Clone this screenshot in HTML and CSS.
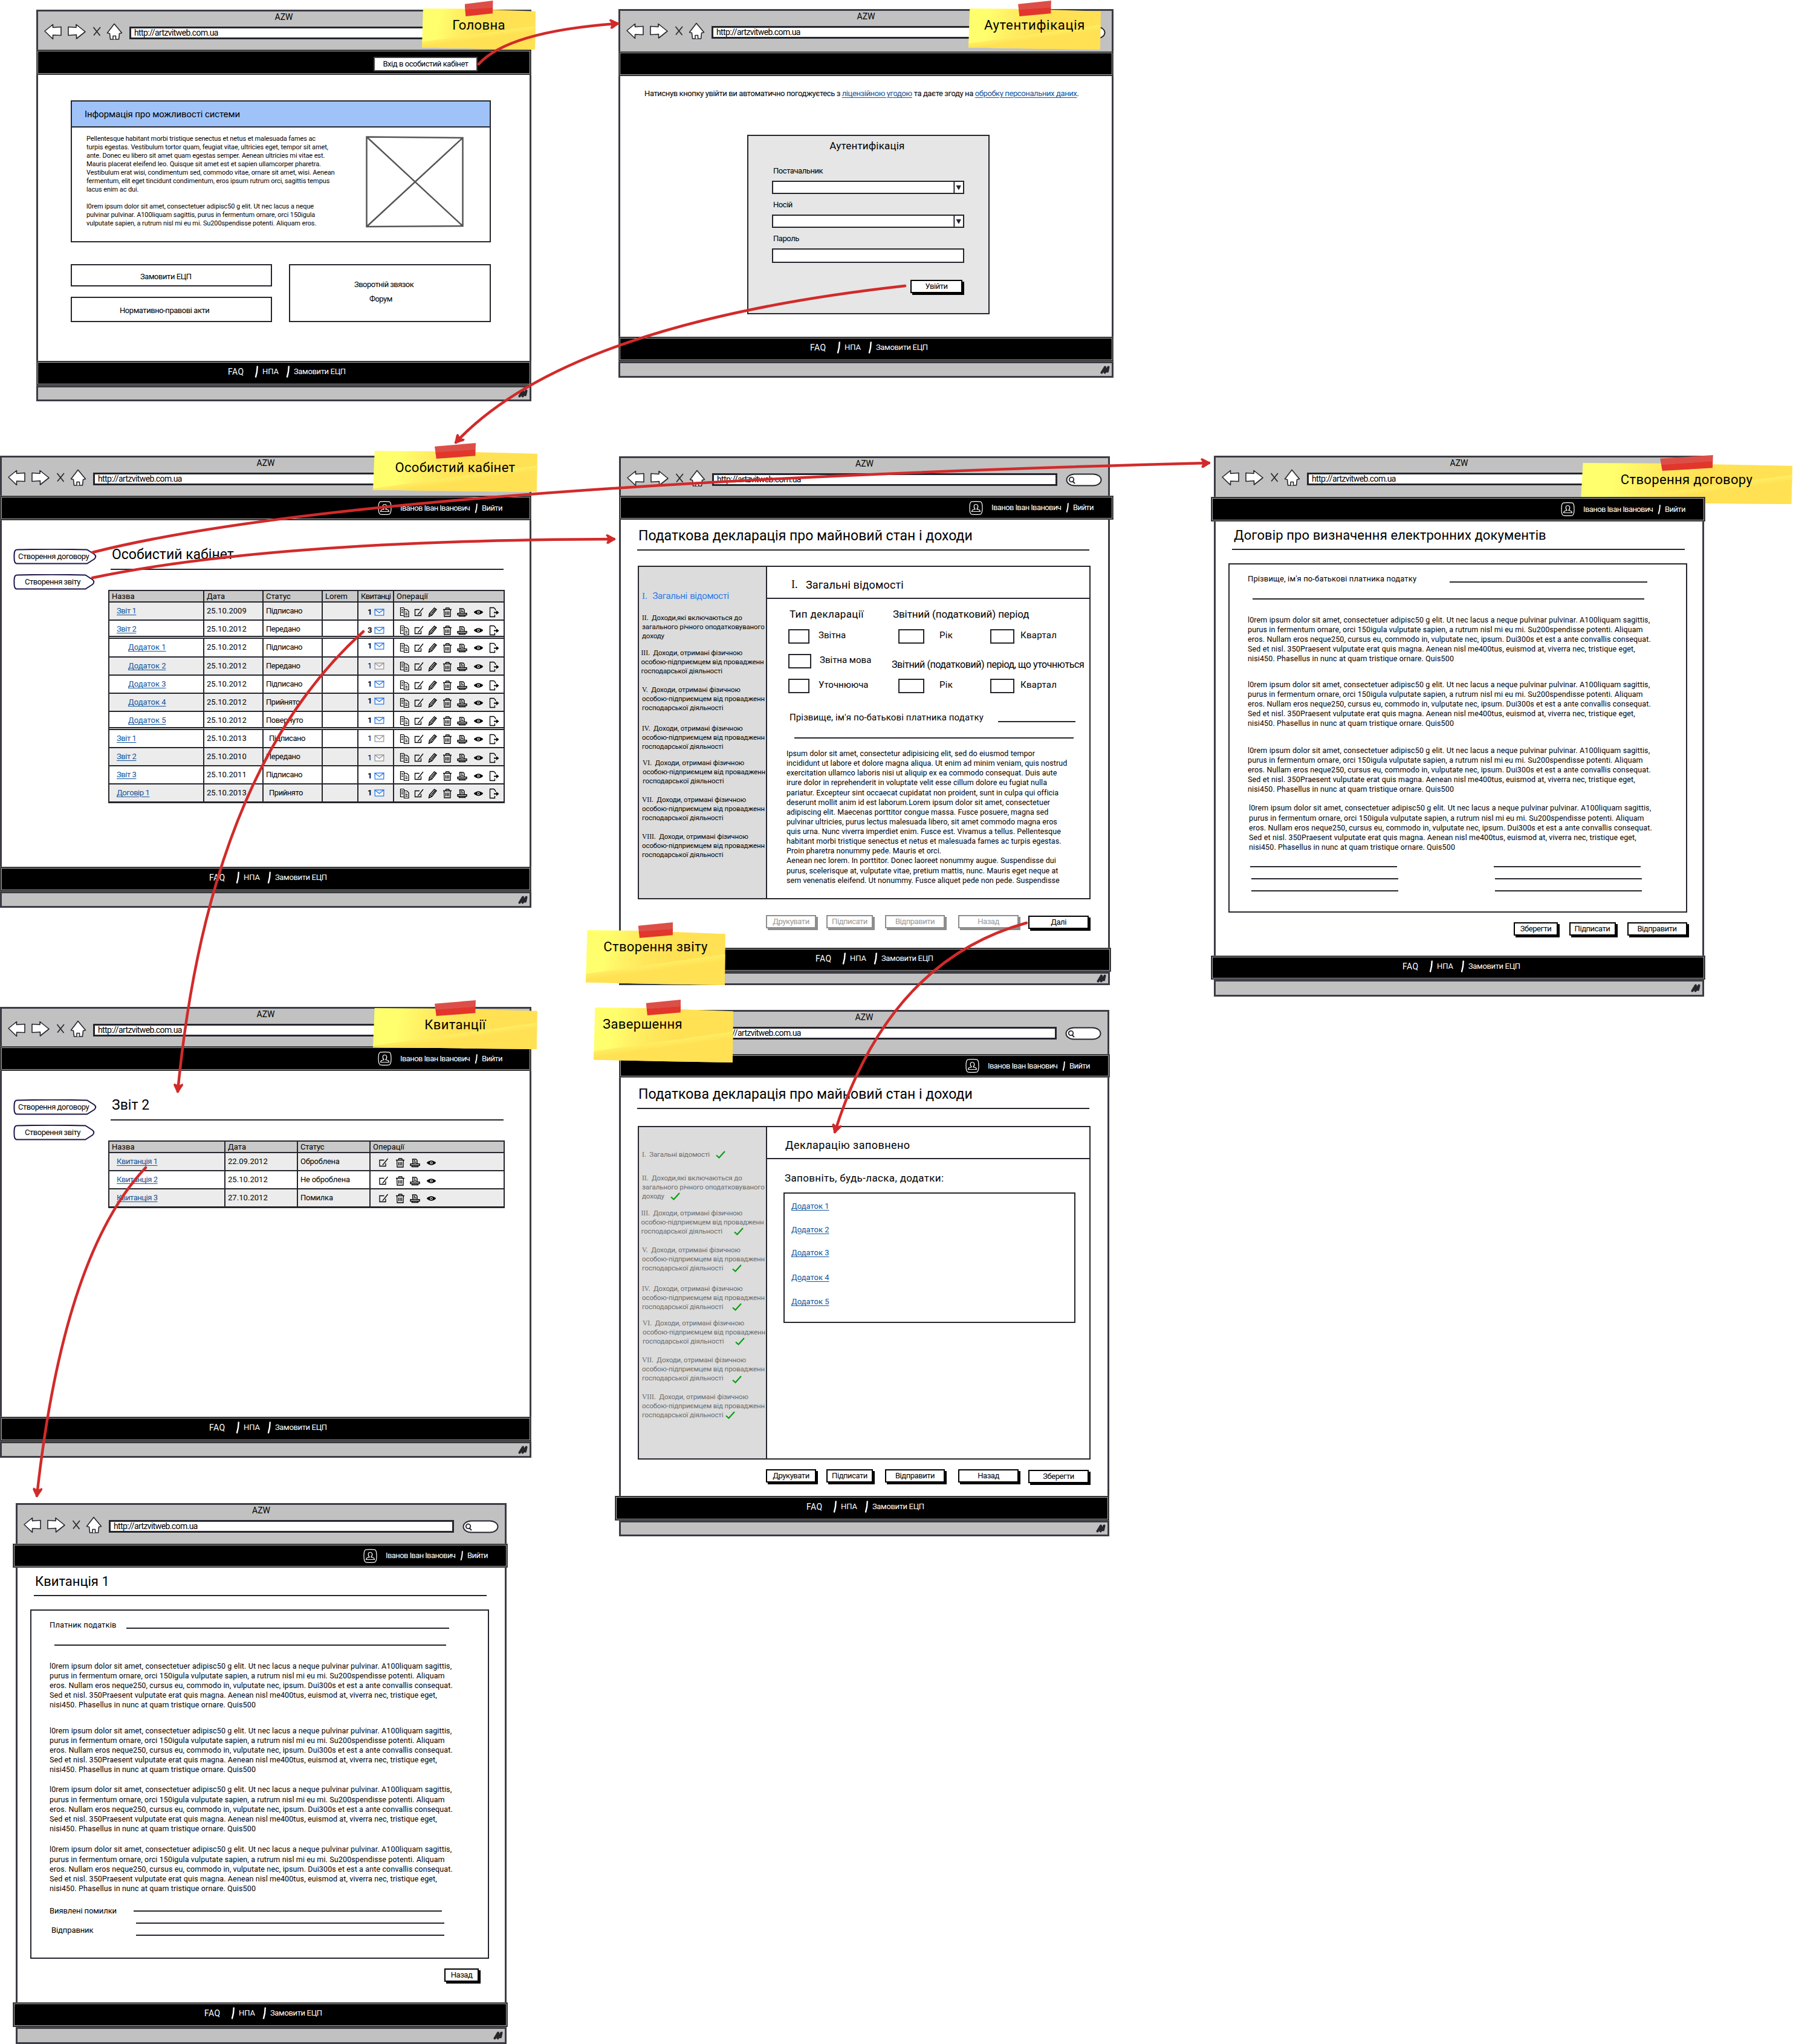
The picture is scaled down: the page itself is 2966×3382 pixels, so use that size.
FILE: index.html
```html
<!DOCTYPE html>
<html lang="uk">
<head>
<meta charset="utf-8">
<title>AZW</title>
<link rel="stylesheet" href="styles.css">
</head>
<body>
<svg class="sprite" aria-hidden="true">
  <symbol id="i-nav" viewBox="0 0 132 34">
    <g fill="#fff" stroke="#25262d" stroke-width="1.6" stroke-linejoin="round">
      <path d="M2 15.500L15.500 4.500V9.500L29 8.500V22.500L15.500 22V28.500Z"/>
      <path d="M41 8.500L54 9.500V4.500L69 16.500L54.500 28V21.500L41 22.500Z"/>
      <path d="M117 3.500L129.500 18.500L125.500 19.500L124.500 29H110.500L109.500 19.500L105.500 18.500Z"/>
      <path d="M115 29V23.500H119.500V29"/>
    </g>
    <path d="M82.500 9L93.500 23M94 9L83 22.500" fill="none" stroke="#2b2c34" stroke-width="1.800"/>
  </symbol>
  <symbol id="i-search" viewBox="0 0 60 22">
    <rect x="1.500" y="1.500" width="57" height="19" rx="13" ry="9.500" fill="#fff" stroke="#25262d" stroke-width="2"/>
    <circle cx="9.500" cy="10.500" r="3.800" fill="none" stroke="#25262d" stroke-width="1.800"/>
    <path d="M11 13L15 17" stroke="#25262d" stroke-width="2"/>
  </symbol>
  <symbol id="i-grip" viewBox="0 0 16 14">
    <path d="M2.500 11.500L8 2.500L7.500 11.500L13.500 2.500L12 9.500" fill="none" stroke="#26262c" stroke-width="4" stroke-linejoin="round" stroke-linecap="round"/>
  </symbol>
  <symbol id="i-slash" viewBox="0 0 6 20">
    <path d="M4.800 0.500L4 10L1.800 19.500" fill="none" stroke="#fff" stroke-width="2.400"/>
  </symbol>
  <symbol id="i-user" viewBox="0 0 23 23">
    <g fill="none" stroke="#fff" stroke-width="1.200">
      <path d="M4 1.200Q11.500 0 19 1.200Q22 2 22 11.500Q22 21 19 21.800Q11.500 23 4 21.800Q1 21 1 11.500Q1 2 4 1.200Z"/>
      <path d="M4.500 17.500H18.500L17.500 15L13 13.500Q15.500 10.500 14.500 7.500Q13.500 5.500 11.500 5.500Q9 5.500 8.300 7.500Q7.500 10.500 10 13.500L5.500 15Z"/>
    </g>
  </symbol>
  <symbol id="i-tag" viewBox="0 0 138 26" preserveAspectRatio="none">
    <path d="M6 1.500Q64 0 122 1.500L134 9Q138.500 13 134 17L122 24.500H6Q1 24.500 1.500 13Q1 1.500 6 1.500Z" fill="#fff" stroke="#1d1548" stroke-width="2"/>
  </symbol>
  <symbol id="i-mail" viewBox="0 0 17 12">
    <path d="M1 1.200L16 0.900L15.700 11L1.300 11.200ZM1 1.200L8.500 7L16 0.900" fill="#fff" fill-opacity=".6" stroke="currentColor" stroke-width="1.300"/>
  </symbol>
  <symbol id="i-check" viewBox="0 0 16 13">
    <path d="M1 7.500L5.500 11.500L15 1" fill="none" stroke="#0a9e14" stroke-width="2.200"/>
  </symbol>
  <symbol id="i-combo" viewBox="0 0 16 20">
    <path d="M1 0V20" stroke="#22232b" stroke-width="2"/>
    <path d="M5 6.500H12.500L9 13.500Z" fill="#22232b" stroke="#22232b"/>
  </symbol>
  <symbol id="i-edit" viewBox="0 0 18 18">
    <path d="M9.500 4.500H2V14.500H12V9.500M15.500 2L8 11.500L6.500 12.500" fill="none" stroke="#000" stroke-width="1.300"/>
  </symbol>
  <symbol id="i-trash" viewBox="0 0 18 18">
    <path d="M2 4.500H16M6 4.500L6.800 2H11.800L12.600 4.500M3.600 4.500L4 16H14L14.300 4.500M6.500 7.500V13.500M9 7.500V13.500M11.500 7.500V13.500" fill="none" stroke="#000" stroke-width="1.300"/>
  </symbol>
  <symbol id="i-print" viewBox="0 0 18 18">
    <path d="M5.500 10.500L5 3H10.500L12.500 5V10.500M7 5.500H9.500M7 8H11M1.500 10.800H16.500V13.500H1.500ZM4 13.500V15.500H14V13.500" fill="none" stroke="#000" stroke-width="1.400"/>
  </symbol>
  <symbol id="i-eye" viewBox="0 0 18 18">
    <path d="M1.200 9Q9 1.500 16.800 9Q9 16.500 1.200 9Z"/>
    <circle cx="9" cy="9" r="2.300" fill="#fff"/>
    <circle cx="9" cy="9" r="1.200"/>
  </symbol>
  <symbol id="i-ops" viewBox="0 0 168 18">
    <g fill="none" stroke="#000" stroke-width="1.200">
      <path d="M6.500 14.500H1.500V1.500H6.500L8.500 3.500M7.500 4.500H12L15 7.500V16.500H7.500Z"/>
      <path d="M3 4.500H6M3 7H6M3 9.500H6M9.500 8H11.500M9.500 10.700H13M9.500 13.300H13"/>
      <path d="M48.500 16L49.500 11L57.500 2L61 4.500L53.500 14ZM49.500 11L53.500 14M52.500 11.500L59 4" stroke-width="1.400"/>
      <path d="M157.500 13V16.500H149.500V1.500H156L158.500 4V6" stroke-width="1.300"/>
      <path d="M156 9.500H162" stroke-width="2"/>
    </g>
    <path d="M160 6L164.500 9.500L160 13Z"/>
    <use href="#i-edit" x="23.500" y="0" width="18" height="18"/>
    <use href="#i-trash" x="70" y="0" width="18" height="18"/>
    <use href="#i-print" x="94.500" y="0" width="18" height="18"/>
    <use href="#i-eye" x="121.500" y="0" width="18" height="18"/>
  </symbol>
  <symbol id="i-ops-short" viewBox="0 0 98 18">
    <use href="#i-edit" x="0" y="0" width="18" height="18"/>
    <use href="#i-trash" x="27" y="0" width="18" height="18"/>
    <use href="#i-print" x="51.500" y="0" width="18" height="18"/>
    <use href="#i-eye" x="78.500" y="0" width="18" height="18"/>
  </symbol>
</svg>

<main class="board">

<section class="window home">
  <header class="chrome"><div class="chrome-title">AZW</div><div class="toolbar"><svg class="nav"><use href="#i-nav"/></svg><div class="url">http://artzvitweb.com.ua</div><svg class="search"><use href="#i-search"/></svg></div></header>
  <div class="topbar"><a class="enter">Вхід в особистий кабінет</a></div>
  <div class="body">
    <article class="info">
      <h2 class="info-title">Інформація про можливості системи</h2>
      <div class="info-body">
        <p class="info-text">Pellentesque habitant morbi tristique senectus et netus et malesuada fames ac<br>turpis egestas. Vestibulum tortor quam, feugiat vitae, ultricies eget, tempor sit amet,<br>ante. Donec eu libero sit amet quam egestas semper. Aenean ultricies mi vitae est.<br>Mauris placerat eleifend leo. Quisque sit amet est et sapien ullamcorper pharetra.<br>Vestibulum erat wisi, condimentum sed, commodo vitae, ornare sit amet, wisi. Aenean<br>fermentum, elit eget tincidunt condimentum, eros ipsum rutrum orci, sagittis tempus<br>lacus enim ac dui.<br><br>l0rem ipsum dolor sit amet, consectetuer adipisc50 g elit. Ut nec lacus a neque<br>pulvinar pulvinar. A100liquam sagittis, purus in fermentum ornare, orci 150igula<br>vulputate sapien, a rutrum nisl mi eu mi. Su200spendisse potenti. Aliquam eros.</p>
        <svg class="picture" viewBox="0 0 162 151"><path d="M1.500 1.500L160.500 3V149L1.500 150ZM1.500 1.500L160.500 149M160.500 3L1.500 150" fill="none" stroke="#555" stroke-width="2.500"/></svg>
      </div>
    </article>
    <div class="tiles">
      <div class="tile order">Замовити ЕЦП</div>
      <div class="tile contact"><p>Зворотній звязок</p><p class="forum">Форум</p></div>
      <div class="tile acts">Нормативно-правові акти</div>
    </div>
  </div>
  <footer class="links"><a>FAQ</a><svg><use href="#i-slash"/></svg><a>НПА</a><svg><use href="#i-slash"/></svg><a>Замовити ЕЦП</a></footer>
  <div class="status"><svg><use href="#i-grip"/></svg></div>
</section>

<section class="window login">
  <header class="chrome"><div class="chrome-title">AZW</div><div class="toolbar"><svg class="nav"><use href="#i-nav"/></svg><div class="url">http://artzvitweb.com.ua</div><svg class="search"><use href="#i-search"/></svg></div></header>
  <div class="topbar"></div>
  <div class="body">
    <p class="consent">Натиснув кнопку увійти ви автоматично погоджуєтесь з <a class="link">ліцензійною угодою</a> та даєте згоду на <a class="link">обробку персональних даних</a>.</p>
    <form class="auth">
      <h2 class="auth-title">Аутентифікація</h2>
      <label class="auth-label">Постачальник</label>
      <div class="field"><svg><use href="#i-combo"/></svg></div>
      <label class="auth-label">Носій</label>
      <div class="field"><svg><use href="#i-combo"/></svg></div>
      <label class="auth-label">Пароль</label>
      <div class="field password"></div>
      <a class="btn signin">Увійти</a>
    </form>
  </div>
  <footer class="links"><a>FAQ</a><svg><use href="#i-slash"/></svg><a>НПА</a><svg><use href="#i-slash"/></svg><a>Замовити ЕЦП</a></footer>
  <div class="status"><svg><use href="#i-grip"/></svg></div>
</section>

<section class="window cabinet">
  <header class="chrome"><div class="chrome-title">AZW</div><div class="toolbar"><svg class="nav"><use href="#i-nav"/></svg><div class="url">http://artzvitweb.com.ua</div><svg class="search"><use href="#i-search"/></svg></div></header>
  <div class="topbar user"><svg class="avatar"><use href="#i-user"/></svg><span class="name">Іванов Іван Іванович</span><svg class="bar"><use href="#i-slash"/></svg><a>Вийти</a></div>
  <div class="body split">
    <nav class="tags"><a class="tag"><svg><use href="#i-tag"/></svg><span>Створення договору</span></a><a class="tag short"><svg><use href="#i-tag"/></svg><span>Створення звіту</span></a></nav>
    <div class="main">
      <h1 class="page-title">Особистий кабінет</h1>
      <div class="rule"></div>
      <div class="grid reports">
        <div class="row head"><span>Назва</span><span>Дата</span><span>Статус</span><span>Lorem</span><span class="tight">Квитанці</span><span>Операції</span></div>
        <div class="row odd"><span><a class="link">Звіт 1</a></span><span>25.10.2009</span><span>Підписано</span><span></span><span class="mail low">1<svg><use href="#i-mail"/></svg></span><span class="ops"><svg><use href="#i-ops"/></svg></span></div>
        <div class="row last"><span><a class="link">Звіт 2</a></span><span>25.10.2012</span><span>Передано</span><span></span><span class="mail low">3<svg><use href="#i-mail"/></svg></span><span class="ops"><svg><use href="#i-ops"/></svg></span></div>
        <div class="row tall nested"><span><a class="link">Додаток 1</a></span><span>25.10.2012</span><span>Підписано</span><span></span><span class="mail high">1<svg><use href="#i-mail"/></svg></span><span class="ops mid"><svg><use href="#i-ops"/></svg></span></div>
        <div class="row odd nested"><span><a class="link">Додаток 2</a></span><span>25.10.2012</span><span>Передано</span><span></span><span class="mail read">1<svg><use href="#i-mail"/></svg></span><span class="ops mid"><svg><use href="#i-ops"/></svg></span></div>
        <div class="row nested"><span><a class="link">Додаток 3</a></span><span>25.10.2012</span><span>Підписано</span><span></span><span class="mail">1<svg><use href="#i-mail"/></svg></span><span class="ops"><svg><use href="#i-ops"/></svg></span></div>
        <div class="row odd nested"><span><a class="link">Додаток 4</a></span><span>25.10.2012</span><span>Прийнято</span><span></span><span class="mail high">1<svg><use href="#i-mail"/></svg></span><span class="ops mid"><svg><use href="#i-ops"/></svg></span></div>
        <div class="row nested last"><span><a class="link">Додаток 5</a></span><span>25.10.2012</span><span>Повернуто</span><span></span><span class="mail">1<svg><use href="#i-mail"/></svg></span><span class="ops mid"><svg><use href="#i-ops"/></svg></span></div>
        <div class="row"><span><a class="link">Звіт 1</a></span><span>25.10.2013</span><span class="shift">Підписано</span><span></span><span class="mail read">1<svg><use href="#i-mail"/></svg></span><span class="ops mid"><svg><use href="#i-ops"/></svg></span></div>
        <div class="row odd"><span><a class="link">Звіт 2</a></span><span>25.10.2010</span><span>Передано</span><span></span><span class="mail read low">1<svg><use href="#i-mail"/></svg></span><span class="ops"><svg><use href="#i-ops"/></svg></span></div>
        <div class="row"><span><a class="link">Звіт 3</a></span><span>25.10.2011</span><span>Підписано</span><span></span><span class="mail low">1<svg><use href="#i-mail"/></svg></span><span class="ops"><svg><use href="#i-ops"/></svg></span></div>
        <div class="row odd"><span><a class="link">Договір 1</a></span><span>25.10.2013</span><span class="shift">Прийнято</span><span></span><span class="mail">1<svg><use href="#i-mail"/></svg></span><span class="ops mid"><svg><use href="#i-ops"/></svg></span></div>
      </div>
    </div>
  </div>
  <footer class="links"><a>FAQ</a><svg><use href="#i-slash"/></svg><a>НПА</a><svg><use href="#i-slash"/></svg><a>Замовити ЕЦП</a></footer>
  <div class="status"><svg><use href="#i-grip"/></svg></div>
</section>

<section class="window declaration">
  <header class="chrome"><div class="chrome-title">AZW</div><div class="toolbar"><svg class="nav"><use href="#i-nav"/></svg><div class="url">http://artzvitweb.com.ua</div><svg class="search"><use href="#i-search"/></svg></div></header>
  <div class="topbar user"><svg class="avatar"><use href="#i-user"/></svg><span class="name">Іванов Іван Іванович</span><svg class="bar"><use href="#i-slash"/></svg><a>Вийти</a></div>
  <div class="body">
    <h1 class="page-title">Податкова декларація про майновий стан і доходи</h1>
    <div class="rule"></div>
    <div class="wizard">
      <ol class="steps">
        <li class="current"><i>I.</i> &nbsp;Загальні відомості</li>
        <li class="s2"><i>II.</i> &nbsp;Доходи,які включаються до<br>загального річного оподатковуваного<br>доходу</li>
        <li class="s3"><i>III.</i> &nbsp;Доходи, отримані фізичною<br>особою-підприємцем від провадженн<br>господарської діяльності</li>
        <li class="s4"><i>V.</i> &nbsp;Доходи, отримані фізичною<br>особою-підприємцем від провадженн<br>господарської діяльності</li>
        <li class="s5"><i>IV.</i> &nbsp;Доходи, отримані фізичною<br>особою-підприємцем від провадженн<br>господарської діяльності</li>
        <li class="s6"><i>VI.</i> &nbsp;Доходи, отримані фізичною<br>особою-підприємцем від провадженн<br>господарської діяльності</li>
        <li class="s7"><i>VII.</i> &nbsp;Доходи, отримані фізичною<br>особою-підприємцем від провадженн<br>господарської діяльності</li>
        <li class="s8"><i>VIII.</i> &nbsp;Доходи, отримані фізичною<br>особою-підприємцем від провадженн<br>господарської діяльності</li>
      </ol>
      <div class="pane">
        <h2 class="pane-title first"><i>I.</i><span>Загальні відомості</span></h2>
        <div class="choices">
          <div class="kinds">
            <h3>Тип декларації</h3>
            <div class="option k1"><b class="box"></b>Звітна</div>
            <div class="option k2"><b class="box"></b>Звітна мова</div>
            <div class="option k3"><b class="box"></b>Уточнююча</div>
          </div>
          <div class="periods">
            <h3>Звітний (податковий) період</h3>
            <div class="period"><b class="box"></b><span>Рік</span><b class="box"></b><span>Квартал</span></div>
            <h3 class="second">Звітний (податковий) період, що уточнються</h3>
            <div class="period"><b class="box"></b><span>Рік</span><b class="box"></b><span>Квартал</span></div>
          </div>
        </div>
        <div class="payer"><span>Прізвище, ім'я по-батькові платника податку</span><hr></div>
        <hr class="payer-line">
        <p class="terms">Ipsum dolor sit amet, consectetur adipisicing elit, sed do eiusmod tempor<br>incididunt ut labore et dolore magna aliqua. Ut enim ad minim veniam, quis nostrud<br>exercitation ullamco laboris nisi ut aliquip ex ea commodo consequat. Duis aute<br>irure dolor in reprehenderit in voluptate velit esse cillum dolore eu fugiat nulla<br>pariatur. Excepteur sint occaecat cupidatat non proident, sunt in culpa qui officia<br>deserunt mollit anim id est laborum.Lorem ipsum dolor sit amet, consectetuer<br>adipiscing elit. Maecenas porttitor congue massa. Fusce posuere, magna sed<br>pulvinar ultricies, purus lectus malesuada libero, sit amet commodo magna eros<br>quis urna. Nunc viverra imperdiet enim. Fusce est. Vivamus a tellus. Pellentesque<br>habitant morbi tristique senectus et netus et malesuada fames ac turpis egestas.<br>Proin pharetra nonummy pede. Mauris et orci.<br>Aenean nec lorem. In porttitor. Donec laoreet nonummy augue. Suspendisse dui<br>purus, scelerisque at, vulputate vitae, pretium mattis, nunc. Mauris eget neque at<br>sem venenatis eleifend. Ut nonummy. Fusce aliquet pede non pede. Suspendisse</p>
      </div>
    </div>
    <div class="actions"><a class="btn off">Друкувати</a><a class="btn off">Підписати</a><a class="btn off">Відправити</a><a class="btn off">Назад</a><a class="btn">Далі</a></div>
  </div>
  <footer class="links"><a>FAQ</a><svg><use href="#i-slash"/></svg><a>НПА</a><svg><use href="#i-slash"/></svg><a>Замовити ЕЦП</a></footer>
  <div class="status"><svg><use href="#i-grip"/></svg></div>
</section>

<section class="window contract">
  <header class="chrome"><div class="chrome-title">AZW</div><div class="toolbar"><svg class="nav"><use href="#i-nav"/></svg><div class="url">http://artzvitweb.com.ua</div><svg class="search"><use href="#i-search"/></svg></div></header>
  <div class="topbar user"><svg class="avatar"><use href="#i-user"/></svg><span class="name">Іванов Іван Іванович</span><svg class="bar"><use href="#i-slash"/></svg><a>Вийти</a></div>
  <div class="body">
    <h1 class="page-title">Договір про визначення електронних документів</h1>
    <div class="rule"></div>
    <div class="doc">
      <div class="doc-field"><span>Прізвище, ім'я по-батькові платника податку</span><hr></div>
      <hr class="doc-line">
      <p class="para">l0rem ipsum dolor sit amet, consectetuer adipisc50 g elit. Ut nec lacus a neque pulvinar pulvinar. A100liquam sagittis,<br>purus in fermentum ornare, orci 150igula vulputate sapien, a rutrum nisl mi eu mi. Su200spendisse potenti. Aliquam<br>eros. Nullam eros neque250, cursus eu, commodo in, vulputate nec, ipsum. Dui300s et est a ante convallis consequat.<br>Sed et nisl. 350Praesent vulputate erat quis magna. Aenean nisl me400tus, euismod at, viverra nec, tristique eget,<br>nisi450. Phasellus in nunc at quam tristique ornare. Quis500</p>
      <p class="para">l0rem ipsum dolor sit amet, consectetuer adipisc50 g elit. Ut nec lacus a neque pulvinar pulvinar. A100liquam sagittis,<br>purus in fermentum ornare, orci 150igula vulputate sapien, a rutrum nisl mi eu mi. Su200spendisse potenti. Aliquam<br>eros. Nullam eros neque250, cursus eu, commodo in, vulputate nec, ipsum. Dui300s et est a ante convallis consequat.<br>Sed et nisl. 350Praesent vulputate erat quis magna. Aenean nisl me400tus, euismod at, viverra nec, tristique eget,<br>nisi450. Phasellus in nunc at quam tristique ornare. Quis500</p>
      <p class="para">l0rem ipsum dolor sit amet, consectetuer adipisc50 g elit. Ut nec lacus a neque pulvinar pulvinar. A100liquam sagittis,<br>purus in fermentum ornare, orci 150igula vulputate sapien, a rutrum nisl mi eu mi. Su200spendisse potenti. Aliquam<br>eros. Nullam eros neque250, cursus eu, commodo in, vulputate nec, ipsum. Dui300s et est a ante convallis consequat.<br>Sed et nisl. 350Praesent vulputate erat quis magna. Aenean nisl me400tus, euismod at, viverra nec, tristique eget,<br>nisi450. Phasellus in nunc at quam tristique ornare. Quis500</p>
      <p class="para">l0rem ipsum dolor sit amet, consectetuer adipisc50 g elit. Ut nec lacus a neque pulvinar pulvinar. A100liquam sagittis,<br>purus in fermentum ornare, orci 150igula vulputate sapien, a rutrum nisl mi eu mi. Su200spendisse potenti. Aliquam<br>eros. Nullam eros neque250, cursus eu, commodo in, vulputate nec, ipsum. Dui300s et est a ante convallis consequat.<br>Sed et nisl. 350Praesent vulputate erat quis magna. Aenean nisl me400tus, euismod at, viverra nec, tristique eget,<br>nisi450. Phasellus in nunc at quam tristique ornare. Quis500</p>
      <div class="signs"><hr><hr><hr class="in"><hr class="in"><hr class="in"><hr class="in"></div>
    </div>
    <div class="actions"><a class="btn">Зберегти</a><a class="btn">Підписати</a><a class="btn">Відправити</a></div>
  </div>
  <footer class="links"><a>FAQ</a><svg><use href="#i-slash"/></svg><a>НПА</a><svg><use href="#i-slash"/></svg><a>Замовити ЕЦП</a></footer>
  <div class="status"><svg><use href="#i-grip"/></svg></div>
</section>

<section class="window cabinet receipts">
  <header class="chrome"><div class="chrome-title">AZW</div><div class="toolbar"><svg class="nav"><use href="#i-nav"/></svg><div class="url">http://artzvitweb.com.ua</div><svg class="search"><use href="#i-search"/></svg></div></header>
  <div class="topbar user"><svg class="avatar"><use href="#i-user"/></svg><span class="name">Іванов Іван Іванович</span><svg class="bar"><use href="#i-slash"/></svg><a>Вийти</a></div>
  <div class="body split">
    <nav class="tags"><a class="tag"><svg><use href="#i-tag"/></svg><span>Створення договору</span></a><a class="tag short"><svg><use href="#i-tag"/></svg><span>Створення звіту</span></a></nav>
    <div class="main">
      <h1 class="page-title">Звіт 2</h1>
      <div class="rule"></div>
      <div class="grid notices">
        <div class="row head"><span>Назва</span><span>Дата</span><span>Статус</span><span>Операції</span></div>
        <div class="row odd"><span><a class="link">Квитанція 1</a></span><span>22.09.2012</span><span>Оброблена</span><span class="ops"><svg><use href="#i-ops-short"/></svg></span></div>
        <div class="row"><span><a class="link">Квитанція 2</a></span><span>25.10.2012</span><span>Не оброблена</span><span class="ops"><svg><use href="#i-ops-short"/></svg></span></div>
        <div class="row odd"><span><a class="link">Квитанція 3</a></span><span>27.10.2012</span><span>Помилка</span><span class="ops mid"><svg><use href="#i-ops-short"/></svg></span></div>
      </div>
    </div>
  </div>
  <footer class="links"><a>FAQ</a><svg><use href="#i-slash"/></svg><a>НПА</a><svg><use href="#i-slash"/></svg><a>Замовити ЕЦП</a></footer>
  <div class="status"><svg><use href="#i-grip"/></svg></div>
</section>

<section class="window declaration done">
  <header class="chrome"><div class="chrome-title">AZW</div><div class="toolbar"><svg class="nav"><use href="#i-nav"/></svg><div class="url">http://artzvitweb.com.ua</div><svg class="search"><use href="#i-search"/></svg></div></header>
  <div class="topbar user"><svg class="avatar"><use href="#i-user"/></svg><span class="name">Іванов Іван Іванович</span><svg class="bar"><use href="#i-slash"/></svg><a>Вийти</a></div>
  <div class="body">
    <h1 class="page-title">Податкова декларація про майновий стан і доходи</h1>
    <div class="rule"></div>
    <div class="wizard">
      <ol class="steps">
        <li class="s1"><i>I.</i> &nbsp;Загальні відомості<svg><use href="#i-check"/></svg></li>
        <li class="s2"><i>II.</i> &nbsp;Доходи,які включаються до<br>загального річного оподатковуваного<br>доходу<svg><use href="#i-check"/></svg></li>
        <li class="s3"><i>III.</i> &nbsp;Доходи, отримані фізичною<br>особою-підприємцем від провадженн<br>господарської діяльності<svg><use href="#i-check"/></svg></li>
        <li class="s4"><i>V.</i> &nbsp;Доходи, отримані фізичною<br>особою-підприємцем від провадженн<br>господарської діяльності<svg><use href="#i-check"/></svg></li>
        <li class="s5"><i>IV.</i> &nbsp;Доходи, отримані фізичною<br>особою-підприємцем від провадженн<br>господарської діяльності<svg><use href="#i-check"/></svg></li>
        <li class="s6"><i>VI.</i> &nbsp;Доходи, отримані фізичною<br>особою-підприємцем від провадженн<br>господарської діяльності<svg><use href="#i-check"/></svg></li>
        <li class="s7"><i>VII.</i> &nbsp;Доходи, отримані фізичною<br>особою-підприємцем від провадженн<br>господарської діяльності<svg><use href="#i-check"/></svg></li>
        <li class="s8"><i>VIII.</i> &nbsp;Доходи, отримані фізичною<br>особою-підприємцем від провадженн<br>господарської діяльності<svg><use href="#i-check"/></svg></li>
      </ol>
      <div class="pane">
        <h2 class="pane-title">Декларацію заповнено</h2>
        <h3 class="fill">Заповніть, будь-ласка, додатки:</h3>
        <div class="annexes"><a class="link">Додаток 1</a><a class="link">Додаток 2</a><a class="link">Додаток 3</a><a class="link">Додаток 4</a><a class="link">Додаток 5</a></div>
      </div>
    </div>
    <div class="actions"><a class="btn">Друкувати</a><a class="btn">Підписати</a><a class="btn">Відправити</a><a class="btn">Назад</a><a class="btn">Зберегти</a></div>
  </div>
  <footer class="links"><a>FAQ</a><svg><use href="#i-slash"/></svg><a>НПА</a><svg><use href="#i-slash"/></svg><a>Замовити ЕЦП</a></footer>
  <div class="status"><svg><use href="#i-grip"/></svg></div>
</section>

<section class="window contract receipt">
  <header class="chrome"><div class="chrome-title">AZW</div><div class="toolbar"><svg class="nav"><use href="#i-nav"/></svg><div class="url">http://artzvitweb.com.ua</div><svg class="search"><use href="#i-search"/></svg></div></header>
  <div class="topbar user"><svg class="avatar"><use href="#i-user"/></svg><span class="name">Іванов Іван Іванович</span><svg class="bar"><use href="#i-slash"/></svg><a>Вийти</a></div>
  <div class="body">
    <h1 class="page-title">Квитанція 1</h1>
    <div class="rule"></div>
    <div class="doc">
      <div class="doc-field"><span>Платник податків</span><hr></div>
      <hr class="doc-line">
      <p class="para">l0rem ipsum dolor sit amet, consectetuer adipisc50 g elit. Ut nec lacus a neque pulvinar pulvinar. A100liquam sagittis,<br>purus in fermentum ornare, orci 150igula vulputate sapien, a rutrum nisl mi eu mi. Su200spendisse potenti. Aliquam<br>eros. Nullam eros neque250, cursus eu, commodo in, vulputate nec, ipsum. Dui300s et est a ante convallis consequat.<br>Sed et nisl. 350Praesent vulputate erat quis magna. Aenean nisl me400tus, euismod at, viverra nec, tristique eget,<br>nisi450. Phasellus in nunc at quam tristique ornare. Quis500</p>
      <p class="para">l0rem ipsum dolor sit amet, consectetuer adipisc50 g elit. Ut nec lacus a neque pulvinar pulvinar. A100liquam sagittis,<br>purus in fermentum ornare, orci 150igula vulputate sapien, a rutrum nisl mi eu mi. Su200spendisse potenti. Aliquam<br>eros. Nullam eros neque250, cursus eu, commodo in, vulputate nec, ipsum. Dui300s et est a ante convallis consequat.<br>Sed et nisl. 350Praesent vulputate erat quis magna. Aenean nisl me400tus, euismod at, viverra nec, tristique eget,<br>nisi450. Phasellus in nunc at quam tristique ornare. Quis500</p>
      <p class="para">l0rem ipsum dolor sit amet, consectetuer adipisc50 g elit. Ut nec lacus a neque pulvinar pulvinar. A100liquam sagittis,<br>purus in fermentum ornare, orci 150igula vulputate sapien, a rutrum nisl mi eu mi. Su200spendisse potenti. Aliquam<br>eros. Nullam eros neque250, cursus eu, commodo in, vulputate nec, ipsum. Dui300s et est a ante convallis consequat.<br>Sed et nisl. 350Praesent vulputate erat quis magna. Aenean nisl me400tus, euismod at, viverra nec, tristique eget,<br>nisi450. Phasellus in nunc at quam tristique ornare. Quis500</p>
      <p class="para">l0rem ipsum dolor sit amet, consectetuer adipisc50 g elit. Ut nec lacus a neque pulvinar pulvinar. A100liquam sagittis,<br>purus in fermentum ornare, orci 150igula vulputate sapien, a rutrum nisl mi eu mi. Su200spendisse potenti. Aliquam<br>eros. Nullam eros neque250, cursus eu, commodo in, vulputate nec, ipsum. Dui300s et est a ante convallis consequat.<br>Sed et nisl. 350Praesent vulputate erat quis magna. Aenean nisl me400tus, euismod at, viverra nec, tristique eget,<br>nisi450. Phasellus in nunc at quam tristique ornare. Quis500</p>
      <div class="outcome">
        <div class="outcome-labels"><span>Виявлені помилки</span><span class="sender">Відправник</span></div>
        <div class="outcome-lines"><hr><hr class="in"><hr class="in"></div>
      </div>
    </div>
    <div class="actions"><a class="btn">Назад</a></div>
  </div>
  <footer class="links"><a>FAQ</a><svg><use href="#i-slash"/></svg><a>НПА</a><svg><use href="#i-slash"/></svg><a>Замовити ЕЦП</a></footer>
  <div class="status"><svg><use href="#i-grip"/></svg></div>
</section>

<div class="note n-home">Головна</div>
<div class="note n-login">Аутентифікація</div>
<div class="note n-cabinet">Особистий кабінет</div>
<div class="note n-report">Створення звіту</div>
<div class="note n-contract">Створення договору</div>
<div class="note n-receipts">Квитанції</div>
<div class="note n-done">Завершення</div>

<svg class="flows" viewBox="0 0 2966 3382">
  <defs>
    <marker id="tip" viewBox="0 0 18 18" refX="15" refY="9" markerWidth="18" markerHeight="18" markerUnits="userSpaceOnUse" orient="auto"><path d="M1 2L4 1L16 7.500Q18 9 16 10.500L5 17L2 16L4 11V7Z" fill="#d22a2a"/></marker>
  </defs>
  <g fill="none" stroke="#d22a2a" stroke-width="4.500" stroke-linecap="round" marker-end="url(#tip)">
    <path d="M792 106Q841 52 1022 39"/>
    <path d="M1497 473Q939 535 754 732"/>
    <path d="M153 914Q595 802 2000 766"/>
    <path d="M153 956Q449 894 1016 892"/>
    <path d="M601 1045Q345 1275 294 1806"/>
    <path d="M241 1932Q105 2075 61 2475"/>
    <path d="M1698 1527Q1470 1590 1381 1873"/>
  </g>
</svg>
</main>
</body>
</html>
```
FILE: styles.css
```css
:root { --ink: #25262d; --frame: #3b3c45; --chrome: #c1c1c1; }
* { box-sizing: border-box; }
html, body { margin: 0; }
body { background: #fff; color: #000; font: 13px/16px Roboto, "Liberation Sans", sans-serif; letter-spacing: -.45px; }
h1, h2, h3, p, ol, hr { margin: 0; padding: 0; font-weight: 400; }
hr { border: 0; height: 2px; background: var(--ink); }
i { font-family: "Liberation Serif", serif; font-style: normal; letter-spacing: 0; }
svg { display: block; overflow: visible; flex: none; }
.sprite { position: absolute; width: 0; height: 0; }
.board { position: relative; width: 2966px; height: 3382px; overflow: hidden; white-space: nowrap; }

/* Browser windows pinned on the board */
.window { position: absolute; display: flex; flex-direction: column; border: solid var(--frame); border-width: 0 3px; background: #fff; }
.home { left: 60px; top: 16px; width: 819px; height: 648px; --chrome-h: 66px; --bar-h: 42px; --foot-h: 41px; --status-h: 26px; }
.login { left: 1023px; top: 15px; width: 819px; height: 610px; --chrome-h: 70px; --bar-h: 41px; --foot-h: 41px; --status-h: 27px; }
.cabinet { left: 0; top: 754px; width: 879px; height: 748px; --chrome-h: 66px; --bar-h: 41px; --foot-h: 41px; --status-h: 27px; --user-x: 625px; --foot-x: 346px; }
.declaration { left: 1024px; top: 755px; width: 812px; height: 875px; --chrome-h: 65px; --bar-h: 40px; --foot-h: 40px; --status-h: 22px; --foot-x: 325px; }
.contract { left: 2008px; top: 754px; width: 811px; height: 895px; --chrome-h: 68px; --bar-h: 41px; --foot-h: 40px; --status-h: 28px; }
.receipts { top: 1666px; height: 746px; --chrome-h: 65px; }
.done { top: 1671px; width: 811px; height: 871px; --chrome-h: 73px; --bar-h: 39px; --foot-h: 41px; --status-h: 26px; --user-x: 573px; --foot-x: 317px; }
.receipt { left: 26px; top: 2487px; width: 812px; height: 895px; --chrome-h: 67px; --bar-h: 40px; --foot-h: 41px; --user-x: 580px; }

.chrome { flex: none; height: var(--chrome-h); margin: 0 -3px; border: 3px solid var(--frame); border-bottom: 0; background: var(--chrome); }
.chrome-title { height: 18px; line-height: 19px; font-size: 14px; letter-spacing: 0; text-align: center; }
.toolbar { display: flex; height: 34px; padding: 0 10px 0 9px; }
.nav { width: 132px; height: 34px; margin: -1px 10px 0 0; }
.url { flex: 1; height: 21px; margin: 7px 14px 0 0; padding-left: 5px; border: 3px solid var(--ink); background: #fff; font-size: 14px; line-height: 15px; letter-spacing: -.6px; }
.search { width: 60px; height: 22px; margin-top: 7px; }
.topbar, .links { flex: none; margin: 0 -3px; border: 1px solid #666; outline: 1px solid #b9b9b9; outline-offset: -3px; background: #000; color: #fff; }
.topbar { height: var(--bar-h); position: relative; z-index: 2; }
.home .topbar, .login .topbar, .cabinet .topbar, .done .topbar { z-index: auto; }
.topbar.user { display: flex; align-items: center; padding-left: calc(var(--user-x, 579px) - 1px); letter-spacing: -.6px; }
.avatar { width: 23px; height: 23px; margin-right: 14px; }
.name { width: 123px; }
.topbar .bar { width: 5px; height: 16px; margin-right: 7px; }
.links { display: flex; align-items: center; height: var(--foot-h); padding: 0 0 5px calc(var(--foot-x, 317px) - 1px); letter-spacing: -.35px; }
.links svg { width: 6px; height: 20px; margin-right: 7px; }
.links a:nth-child(1) { width: 44px; font-size: 14px; letter-spacing: .4px; }
.links a:nth-child(3) { width: 39px; letter-spacing: 0; }
.status { flex: none; display: flex; justify-content: flex-end; align-items: center; height: var(--status-h); margin: 0 -3px; padding-right: 3px; border: 3px solid var(--frame); background: var(--chrome); }
.status svg { width: 16px; height: 14px; }
.body { flex: 1; min-height: 0; }
.declaration .topbar { margin-right: -9px; }
.declaration .links { margin-right: -5px; }
.done .topbar { margin-right: -4px; }
.done .links { margin: 0 -3px 0 -10px; }
.contract .topbar, .contract .links { margin: 0 -5px 0 -8px; }

.link { color: #10559c; text-decoration: underline; text-underline-offset: 2px; }
.btn { display: block; width: 77px; height: 22px; border: 2px solid #000; background: #fff; box-shadow: 3px 3px 0 #000; font-size: 13px; line-height: 18px; text-align: center; }
.btn.off { border-color: #8e8e8e; box-shadow: 3px 3px 0 #8e8e8e; color: #999; }
.page-title { font-size: 23px; line-height: 30px; letter-spacing: 0; }
.rule { height: 2px; background: var(--ink); }

/* Home */
.home .topbar { display: flex; justify-content: flex-end; padding: 11px 88px 0 0; }
.enter { width: 172px; height: 24px; border: 2px solid #444; background: #fff; color: #000; line-height: 20px; text-align: center; }
.info { width: 695px; height: 235px; margin: 42px 0 0 54px; border: 2px solid var(--ink); }
.info-title { height: 43px; padding: 2px 0 0 21px; border-bottom: 2px solid var(--ink); background: #9fc3f9; font-size: 15px; line-height: 38px; letter-spacing: -.1px; }
.info-body { display: flex; padding: 12px 0 0 24px; }
.info-text { width: 462px; font-size: 11px; line-height: 14.050px; letter-spacing: -.1px; }
.picture { width: 162px; height: 151px; margin-top: 2px; }
.tiles { display: grid; grid-template: 37px 42px / 333px 334px; gap: 17px 28px; margin: 36px 0 0 54px; }
.tile { border: 2px solid var(--ink); line-height: 37px; }
.order { padding-left: 113px; }
.acts { padding: 2px 0 0 79px; }
.contact { grid-area: 1 / 2 / 3 / 3; padding: 20px 0 0 106px; line-height: 24px; }
.contact p { letter-spacing: -.55px; }
.forum { margin-left: 25px; }

/* Sign-in */
.consent { padding: 21px 0 0 40px; height: 37px; letter-spacing: -.39px; }
.auth { width: 401px; height: 297px; margin: 60px 0 0 210px; padding: 6px 41px 0; border: 2px solid var(--ink); background: #e6e6e6; }
.auth-title { margin-bottom: 24px; padding-right: 4px; font-size: 17px; line-height: 20px; letter-spacing: .2px; text-align: center; }
.auth-label { display: block; line-height: 16px; }
.field { display: flex; justify-content: flex-end; width: 318px; height: 22px; margin: 8px 0 10px -2px; border: 2px solid var(--ink); background: #fff; }
.field svg { width: 16px; height: 19px; }
.password { height: 24px; margin-bottom: 28px; }
.signin { width: 86px; margin-left: 227px; }

/* Personal cabinet */
.split { display: flex; padding-left: 19px; }
.tags { width: 157px; padding-top: 47px; }
.tag { position: relative; display: block; width: 138px; height: 26px; margin-bottom: 16px; padding-left: 8px; line-height: 26px; }
.tag svg { position: absolute; inset: 0; width: 100%; height: 100%; }
.tag span { position: relative; }
.tag.short { width: 135px; padding-left: 19px; }
.main { width: 656px; padding-top: 42px; }
.main .page-title { padding-left: 6px; }
.main .rule { width: 650px; margin: 8px 0 33px 4px; }
.grid { border: 2px solid var(--ink); border-bottom-width: 1px; }
.row { display: grid; height: 30px; border-bottom: 2px solid var(--ink); line-height: 27px; }
.reports .row { grid-template-columns: 157px 98px 98px 59px 59px 181px; }
.notices .row { grid-template-columns: 192px 120px 120px 220px; }
.row > span { padding-left: 4px; border-right: 2px solid var(--ink); overflow: hidden; }
.row > span:nth-child(2) { letter-spacing: .05px; }
.notices .row > span:nth-child(3) { letter-spacing: -.25px; }
.row > span:last-child { border-right: 0; }
.row > span:first-child { padding-left: 12px; }
.row.nested > span:first-child { padding-left: 31px; letter-spacing: 0; }
.row.head { height: 19px; background: #c9c9c9; line-height: 18px; letter-spacing: 0; }
.row.head > .tight { letter-spacing: -.7px; }
.row.head > span:first-child { padding-left: 4px; }
.odd { background: #ececec; }
.tall { height: 31px; }
.row.last { border-bottom: 5px double var(--ink); }
.row > .shift { padding-left: 9px; }
.row > .mail { display: flex; gap: 4px; padding-left: 15px; font-weight: 700; letter-spacing: 0; }
.mail svg { width: 17px; height: 12px; margin-top: 8px; color: #2a7bea; }
.mail.low { padding-top: 2px; }
.mail.high { line-height: 24px; }
.mail.high svg { margin-top: 6px; }
.row > .read { font-weight: 400; }
.read svg { color: #999; }
.row > .ops { padding: 7px 0 0 9px; }
.row > .ops.mid { padding-top: 6px; }
.ops svg { width: 168px; height: 18px; }
.notices .ops svg { width: 98px; }
.notices .row > .ops { padding-left: 13px; }

/* Declaration wizard */
.declaration .page-title { padding: 12px 0 0 29px; }
.declaration .rule { width: 748px; margin: 7px 0 25px 27px; }
.wizard { display: flex; width: 749px; height: 552px; margin-left: 28px; border: 2px solid var(--ink); }
.steps { flex: none; width: 212px; padding: 38px 0 0 5px; border-right: 2px solid var(--ink); background: #dcdcdc; list-style: none; font-size: 11.500px; line-height: 15.050px; letter-spacing: -.1px; }
.steps .current { height: 20px; color: #2a7bea; font-size: 15px; line-height: 21px; letter-spacing: -.4px; word-spacing: 1px; }
.steps .s1 { height: 20px; }
.s2 { margin-top: 18.500px; }
.s3 { margin: 13.500px 0 0 -1.500px; }
.s4 { margin-top: 16px; }
.s5 { margin-top: 18.500px; }
.s6 { margin: 12px 0 0 1px; }
.s7 { margin-top: 15.500px; }
.s8 { margin-top: 16px; }
.steps svg { display: inline-block; width: 16px; height: 13px; margin: -2px 0 -3px 15px; vertical-align: baseline; }
.steps .s1 svg, .steps .s2 svg { margin-left: 10px; }
.steps .s3 svg, .steps .s6 svg { margin-left: 19px; }
.steps .s7 svg { margin-bottom: -5px; }
.steps .s8 svg { margin-left: 4px; }
.pane { flex: 1; min-width: 0; }
.pane-title { height: 53px; padding: 9px 0 0 30px; border-bottom: 2px solid var(--ink); font-size: 18px; line-height: 41px; letter-spacing: .45px; }
.pane-title.first { display: flex; padding-left: 40px; letter-spacing: .15px; }
.pane-title i { width: 24px; }
.choices { display: flex; height: 186px; padding: 15px 0 0 35px; letter-spacing: 0; }
.choices h3 { font-size: 17px; line-height: 20px; }
.kinds { flex: none; width: 173px; }
.kinds h3 { margin-bottom: 15px; padding-left: 2px; letter-spacing: .35px; }
.option { display: flex; height: 24px; margin-bottom: 17px; font-size: 15px; line-height: 20px; }
.box { width: 35px; height: 24px; margin-right: 15px; border: 2px solid var(--ink); background: #fff; }
.k2 .box { width: 38px; margin-right: 14px; }
.periods h3 { margin-bottom: 15px; letter-spacing: -.1px; }
.periods .second { margin: 25px 0 13px -2px; font-size: 16px; letter-spacing: -.44px; }
.period { display: grid; grid-template-columns: 68px 84px 50px auto; height: 24px; padding-left: 9px; font-size: 15px; line-height: 20px; letter-spacing: .3px; }
.period .box { width: 40px; }
.period .box:first-child { width: 43px; }
.payer { display: flex; padding-left: 37px; font-size: 15px; line-height: 20px; letter-spacing: .12px; }
.payer span { width: 345px; }
.payer hr { width: 128px; margin-top: 16px; }
.payer-line { width: 462px; margin: 23px 0 0 45px; }
.terms { margin: 17px 0 0 32px; font-size: 12.500px; line-height: 16.130px; letter-spacing: .06px; }
.actions { display: grid; }
.declaration .actions { grid-template-columns: 100px 97px 121px 116px 102px; margin: 26px 0 0 240px; }
.declaration .btn:nth-child(1) { width: 83px; }
.declaration .btn:nth-child(3) { width: 99px; }
.declaration .btn:nth-child(4) { width: 100px; }
.declaration .btn:nth-child(5) { width: 100px; margin-top: 1px; }
.done .rule { margin-bottom: 28px; }
.done .page-title { padding-top: 13px; }
.done .steps { color: #6b6b6b; }
.done .actions { margin-top: 16px; }
.fill { padding: 21px 0 0 29px; font-size: 17px; line-height: 20px; letter-spacing: .35px; }
.annexes { display: flex; flex-direction: column; gap: 22.500px; width: 483px; height: 216px; margin: 14px 0 0 27px; padding: 13px 0 0 11px; border: 2px solid var(--ink); letter-spacing: 0; }
.annexes .link { height: 16px; }
.annexes .link:nth-child(n+4) { margin-top: 2px; }

/* Documents */
.contract .page-title { padding: 8px 0 0 30px; font-size: 22px; letter-spacing: .1px; }
.contract .rule { width: 749px; margin: 7px 0 22px 27px; }
.doc { width: 759px; height: 578px; margin-left: 21px; padding: 16px 0 0 30px; border: 2px solid var(--ink); letter-spacing: .13px; }
.doc-field { display: flex; height: 16px; }
.doc-field span { width: 334px; }
.doc-field hr { width: 327px; margin-top: 12px; }
.doc-line { width: 648px; margin: 24px 0 26px 8px; }
.para { margin-bottom: 26.500px; font-size: 12.500px; line-height: 16.100px; letter-spacing: .13px; }
.para:nth-of-type(2) { margin-bottom: 28.500px; }
.para:nth-of-type(3) { margin-bottom: 15px; }
.contract .para:nth-of-type(4) { margin: 0 0 23px 2px; }
.signs { display: grid; grid-template-columns: 243px 243px; gap: 18px 160px; padding-left: 4px; }
.signs .in { margin-left: 2px; margin-right: -2px; }
.contract .actions { grid-template-columns: 91.500px 96px 102px; margin: 16px 0 0 493px; }
.contract .btn:nth-child(1) { width: 73px; }
.contract .btn:nth-child(3) { width: 99px; }
.receipt .page-title { padding-left: 29px; letter-spacing: 0; }
.receipt .doc-field span { width: 127px; }
.receipt .doc-field hr { width: 534px; }
.receipt .para:nth-of-type(2) { margin-bottom: 17px; }
.receipt .para:nth-of-type(3) { margin-bottom: 18.500px; }
.receipt .para:nth-of-type(4) { margin: 0 0 21px; }
.outcome { display: flex; letter-spacing: -.1px; }
.outcome-labels { display: flex; flex-direction: column; gap: 16px; width: 139px; }
.sender { padding-left: 3px; }
.outcome-lines { display: grid; gap: 18px; width: 510px; padding-top: 7px; align-content: start; }
.outcome-lines .in { margin-left: 4px; margin-right: -4px; }
.receipt .actions { grid-template-columns: 60px; margin: 16px 0 0 706px; }
.receipt .btn:nth-child(1) { width: 57px; }

/* Sticky notes */
.note { position: absolute; height: 68px; padding-top: 16px; font-size: 22px; line-height: 24px; letter-spacing: .35px; text-align: center; z-index: 1; }
.note::before { content: ""; position: absolute; inset: 0; z-index: -1; clip-path: polygon(1% 0, 40% 1%, 100% 7%, 99.500% 100%, 55% 98%, 0 95%); background: linear-gradient(172deg, transparent 58%, #ffed62 59%, #ffe356 66%, #ffe153 67%), linear-gradient(100deg, #ffff6e 0 15%, #fff063 30%, #ffe65a 45%, #ffe153 60%); }
.note::after { content: ""; position: absolute; left: 37.500%; top: -13px; width: 25%; height: 26px; clip-path: polygon(0 22%, 100% 0, 99% 82%, 4% 100%); background: linear-gradient(176deg, #dc4f48 50%, #e2352b 52%); }
.n-home { left: 698px; top: 14px; width: 188px; }
.n-login { left: 1602px; top: 14px; width: 219px; letter-spacing: .7px; }
.n-cabinet { left: 617px; top: 746px; width: 272px; }
.n-report { left: 969px; top: 1539px; width: 231px; height: 91px; }
.n-contract { left: 2615px; top: 766px; width: 350px; }
.n-receipts { left: 617px; top: 1668px; width: 272px; }
.n-done { left: 982px; top: 1667px; width: 231px; height: 91px; padding-left: 15px; text-align: left; }

.flows { position: absolute; inset: 0; width: 2966px; height: 3382px; z-index: 3; pointer-events: none; }
```
